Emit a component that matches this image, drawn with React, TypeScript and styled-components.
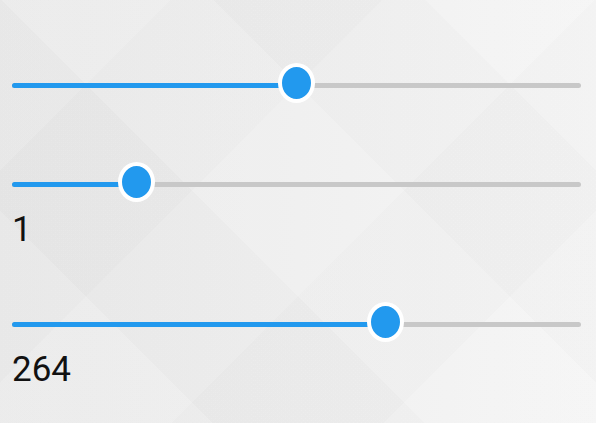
import React from "react";
import styled, { createGlobalStyle } from "styled-components";

const GlobalStyle = createGlobalStyle`
  html, body {
    margin: 0;
    padding: 0;
    height: 100%;
  }
  body {
    font-family: Roboto, "Liberation Sans", Arial, sans-serif;
    background: #eeeeee;
  }
`;

const TRACK_WIDTH = 569;
const THUMB_WIDTH = 37;

type SliderData = {
  value: number;
  max: number;
  label?: string;
};

const sliders: SliderData[] = [
  { value: 50, max: 100 },
  { value: 1, max: 5, label: "1" },
  { value: 264, max: 396, label: "264" },
];

const Slider = ({ value, max }: { value: number; max: number }) => {
  const travel = TRACK_WIDTH - THUMB_WIDTH;
  const left = (value / max) * travel;
  return (
    <SliderRow>
      <Track>
        <Fill style={{ width: left + THUMB_WIDTH / 2 }} />
      </Track>
      <Thumb style={{ left }} />
    </SliderRow>
  );
};

const App = () => {
  return (
    <Page>
      <GlobalStyle />
      {sliders.map((s, i) => (
        <Block key={i}>
          <Slider value={s.value} max={s.max} />
          <ValueLabel>{s.label ?? ""}</ValueLabel>
        </Block>
      ))}
    </Page>
  );
};

const Page = styled.div`
  min-height: 100vh;
  box-sizing: border-box;
  padding: 63px 15px 0 12px;
  background:
    repeating-linear-gradient(
      45deg,
      rgba(255, 255, 255, 0.09) 0 150px,
      rgba(0, 0, 0, 0.006) 150px 300px
    ),
    repeating-linear-gradient(
      -45deg,
      rgba(255, 255, 255, 0.07) 0 150px,
      rgba(0, 0, 0, 0.006) 150px 300px
    ),
    linear-gradient(to right, #e8e8e8, #f4f4f4);
`;

const Block = styled.div`
  display: flex;
  flex-direction: column;
  gap: 7px;
  margin-bottom: 51.5px;
`;

const SliderRow = styled.div`
  position: relative;
  width: ${TRACK_WIDTH}px;
  height: 40px;
`;

const Track = styled.div`
  position: absolute;
  left: 0;
  right: 0;
  top: 20px;
  height: 5px;
  border-radius: 3px;
  background: #c8c8c8;
  overflow: hidden;
`;

const Fill = styled.div`
  height: 100%;
  background: #2299ee;
`;

const Thumb = styled.div`
  position: absolute;
  top: 0;
  box-sizing: border-box;
  width: ${THUMB_WIDTH}px;
  height: 40px;
  border-radius: 50%;
  border: 4px solid #ffffff;
  background: #2299ee;
`;

const ValueLabel = styled.div`
  font-size: 35px;
  line-height: 42px;
  color: #111111;

  &:empty {
    line-height: 0;
  }
`;

export default App;
